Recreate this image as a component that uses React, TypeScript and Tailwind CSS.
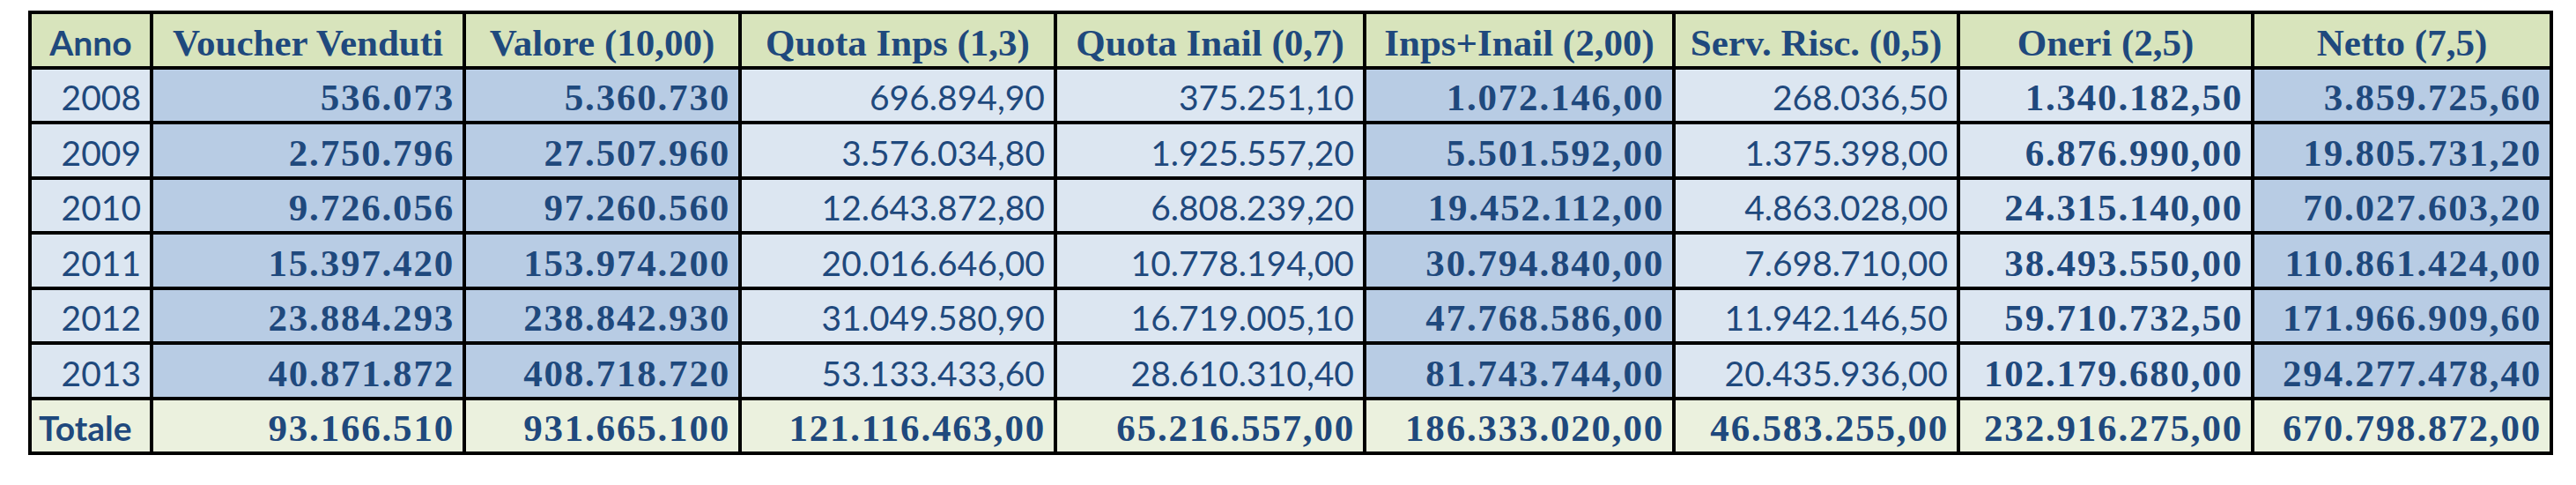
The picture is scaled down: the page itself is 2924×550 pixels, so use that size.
const headers = [
  "Anno",
  "Voucher Venduti",
  "Valore (10,00)",
  "Quota Inps (1,3)",
  "Quota Inail (0,7)",
  "Inps+Inail (2,00)",
  "Serv. Risc. (0,5)",
  "Oneri (2,5)",
  "Netto (7,5)",
];

const rows = [
  ["2008", "536.073", "5.360.730", "696.894,90", "375.251,10", "1.072.146,00", "268.036,50", "1.340.182,50", "3.859.725,60"],
  ["2009", "2.750.796", "27.507.960", "3.576.034,80", "1.925.557,20", "5.501.592,00", "1.375.398,00", "6.876.990,00", "19.805.731,20"],
  ["2010", "9.726.056", "97.260.560", "12.643.872,80", "6.808.239,20", "19.452.112,00", "4.863.028,00", "24.315.140,00", "70.027.603,20"],
  ["2011", "15.397.420", "153.974.200", "20.016.646,00", "10.778.194,00", "30.794.840,00", "7.698.710,00", "38.493.550,00", "110.861.424,00"],
  ["2012", "23.884.293", "238.842.930", "31.049.580,90", "16.719.005,10", "47.768.586,00", "11.942.146,50", "59.710.732,50", "171.966.909,60"],
  ["2013", "40.871.872", "408.718.720", "53.133.433,60", "28.610.310,40", "81.743.744,00", "20.435.936,00", "102.179.680,00", "294.277.478,40"],
];

const totals = ["93.166.510", "931.665.100", "121.116.463,00", "65.216.557,00", "186.333.020,00", "46.583.255,00", "232.916.275,00", "670.798.872,00"];

// which columns get the darker blue fill / the bold serif numbers
const dark = [false, true, true, false, false, true, false, false, true];
const bold = [false, true, true, false, false, true, false, true, true];

const serifBold =
  "font-['Liberation_Serif',serif] font-bold text-[43px] leading-none tracking-[1.8px] pb-[5px] pr-[9px]";
const sansPlain =
  "font-['Lato',sans-serif] font-normal text-[39px] leading-none pb-[7px] pr-[10px]";

const VoucherTable = () => {
  return (
    <div className="grid w-max grid-cols-[134px_351px_309px_354px_347px_347px_319px_330px_335px] auto-rows-[58.5px] gap-[4px] bg-black p-[4px] text-[#1F497D]">
      {headers.map((h, i) => (
        <div
          key={h}
          className={
            i === 0
              ? "flex items-end justify-center bg-[#D8E4BC] pb-[7px] font-['Lato',sans-serif] text-[39px] font-bold leading-none"
              : "flex items-end justify-center whitespace-nowrap bg-[#D8E4BC] pb-[5px] font-['Liberation_Serif',serif] text-[43px] font-bold leading-none"
          }
        >
          {h}
        </div>
      ))}

      {rows.map((row) =>
        row.map((v, i) => (
          <div
            key={row[0] + i}
            className={`flex items-end justify-end whitespace-nowrap ${
              dark[i] ? "bg-[#B8CCE4]" : "bg-[#DCE6F1]"
            } ${bold[i] ? serifBold : sansPlain}`}
          >
            {v}
          </div>
        ))
      )}

      <div className="flex items-end bg-[#EBF1DE] pb-[7px] pl-[8px] font-['Lato',sans-serif] text-[39px] font-bold leading-none">
        Totale
      </div>
      {totals.map((v, i) => (
        <div
          key={"tot" + i}
          className={`flex items-end justify-end whitespace-nowrap bg-[#EBF1DE] ${serifBold}`}
        >
          {v}
        </div>
      ))}
    </div>
  );
};

export default function App() {
  return (
    <div className="h-[550px] w-[2924px] bg-white pl-[32px] pt-[12px]">
      <VoucherTable />
    </div>
  );
}
